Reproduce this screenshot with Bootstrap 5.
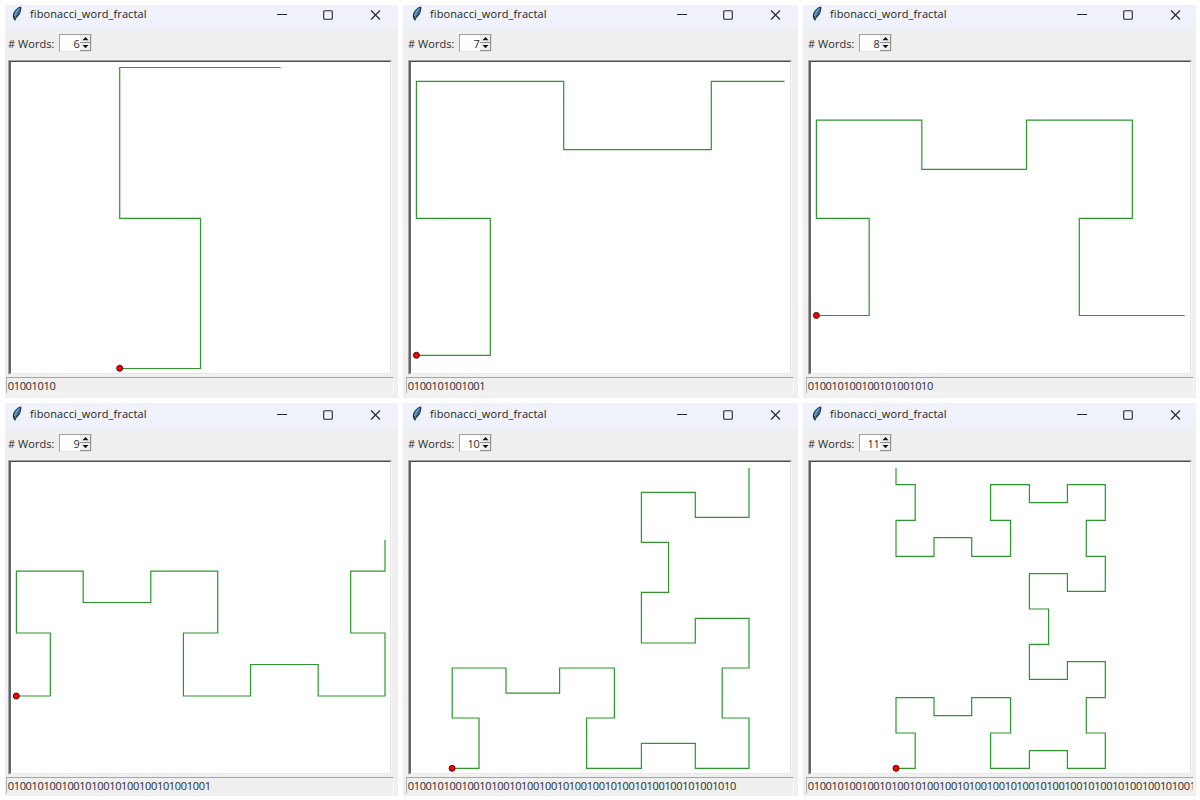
<!DOCTYPE html>
<html lang="en">
<head>
<meta charset="utf-8">
<meta name="viewport" content="width=device-width, initial-scale=1">
<title>fibonacci_word_fractal</title>
<link href="https://cdn.jsdelivr.net/npm/bootstrap@5.3.0/dist/css/bootstrap.min.css" rel="stylesheet">
<style>
  body { background: #fff; font-family: "Open Sans", "Noto Sans", sans-serif; font-size: 11px; line-height: 16px; color: #2a2a2a; }
  .desk { width: 1200px; height: 800px; display: grid; grid-template-columns: 393px 395px 393px; grid-template-rows: 393px 393px; gap: 5px; padding: 5px; }
  .win { background: #efefef; padding-left: 3px; }
  .win:nth-child(3n+1) { padding-left: 1px; }
  .titlebar { height: 24px; background: #eff2fb; margin-left: -3px; padding-left: 8px; color: #1b1b1b; }
  .win:nth-child(3n+1) .titlebar { margin-left: -1px; padding-left: 6px; }
  .win:nth-child(n+4) .titlebar { height: 26px; }
  .titlebar > * { height: 28px; }
  .title-text { width: 119px; margin-left: 7px; line-height: 26px; letter-spacing: .1px; }
  .glyphs { width: 110px; margin-left: 126px; }
  .tools { height: 31px; padding: 5px 0 0 2px; }
  .tools label { width: 50.5px; line-height: 20px; letter-spacing: .05px; }
  .spin { width: 33px; height: 18px; background: #fff; border: 1px solid #e3e3e3; border-top-color: #a0a0a0; border-left-color: #a0a0a0; letter-spacing: -.34px; }
  .spin .num { width: 20px; line-height: 17px; }
  .board { width: 384px; height: 315px; margin-left: 2px; border: 1px solid #a3a3a3; border-right-color: #f6f6f6; border-bottom-color: #f6f6f6; }
  .board > svg { border: 1px solid #e6e6e6; border-top: 1.6px solid #4c4c4c; border-left: 2px solid #636363; background: #fff; width: 382px; height: 313px; }
  .board polyline { fill: none; stroke: #2b982b; stroke-width: 1.2; }
  .board circle { fill: #f00; stroke: #451010; stroke-width: 1; }
  .status { width: 387.500px; height: 17px; margin-top: 2px; border: 1px solid #f8f8f8; border-top-color: #a6a6a6; border-left-color: #b0b0b0; padding-left: .7px; line-height: 16px; letter-spacing: -.32px; white-space: nowrap; }
</style>
</head>
<body>
<svg width="0" height="0" class="position-absolute">
  <symbol id="feather" viewBox="0 0 12 17">
    <path d="M10.200 1C6.500 1.200 2.800 5.300 1.800 9.600L2.100 12.700L4.300 15.600L5.300 12.500C8.800 10.300 11 4.800 10.200 1Z" fill="#26384c"/>
    <path d="M8.800 2C5.800 3.200 3.500 6.500 3 10L4.200 11C5.500 8 7 5 8.800 2Z" fill="#5a9ad8"/>
    <path d="M9.400 2.800C7.500 5 6 8 5.200 11C7.700 9.200 9.500 5.700 9.400 2.800Z" fill="#3a70ad"/>
    <path d="M8.800 2.800C6.700 5.500 4.800 9 4.200 12.500" fill="none" stroke="#a5c6e2" stroke-width=".5"/>
  </symbol>
  <symbol id="controls" viewBox="0 0 110 28">
    <g fill="none" stroke="#262626" stroke-width="1.1">
      <path d="M2 13.500H12M96 9.500L105 18.500M105 9.500L96 18.500"/>
      <rect x="48.700" y="9.700" width="8.600" height="8.600" rx="1"/>
    </g>
  </symbol>
  <symbol id="arrows" viewBox="0 0 11 16">
    <path d="M0 0H11V16H0Z" fill="#efefef"/>
    <path d="M0 7.500H11M0 15.500H11M10.500 0V16" stroke="#8c8c8c" fill="none"/>
    <path d="M2.500 5.200L5.500 2L8.500 5.200ZM2.500 10L5.500 13.200L8.500 10Z" fill="#111"/>
  </symbol>
</svg>

<main class="desk">
  <section class="win overflow-hidden">
    <header class="titlebar d-flex align-items-end"><svg class="flex-shrink-0" width="12" height="28" viewBox="0 0 12 28"><use href="#feather" y="4.500" width="12" height="17"/></svg><span class="title-text">fibonacci_word_fractal</span><svg class="glyphs"><use href="#controls"/></svg></header>
    <div class="tools d-flex"><label># Words:</label><div class="spin d-flex"><span class="num text-end">6</span><svg width="11" height="16"><use href="#arrows"/></svg></div></div>
    <div class="board"><svg class="d-block" viewBox="11 62 379 311"><polyline points="119.5,368.5 200.5,368.5 200.5,218.3 119.7,218.3 119.7,67.5 280.5,67.5"/><circle cx="119.700" cy="368.300" r="3"/></svg></div>
    <div class="status overflow-hidden">01001010</div>
  </section>

  <section class="win overflow-hidden">
    <header class="titlebar d-flex align-items-end"><svg class="flex-shrink-0" width="12" height="28" viewBox="0 0 12 28"><use href="#feather" y="4.500" width="12" height="17"/></svg><span class="title-text">fibonacci_word_fractal</span><svg class="glyphs"><use href="#controls"/></svg></header>
    <div class="tools d-flex"><label># Words:</label><div class="spin d-flex"><span class="num text-end">7</span><svg width="11" height="16"><use href="#arrows"/></svg></div></div>
    <div class="board"><svg class="d-block" viewBox="11 62 379 311"><polyline points="16.4,355.4 90.3,355.4 90.3,218.3 16.4,218.3 16.4,81.3 163.7,81.3 163.7,149.6 311.3,149.6 311.3,81.3 384.5,81.3"/><circle cx="16.400" cy="355.300" r="3"/></svg></div>
    <div class="status overflow-hidden">0100101001001</div>
  </section>

  <section class="win overflow-hidden">
    <header class="titlebar d-flex align-items-end"><svg class="flex-shrink-0" width="12" height="28" viewBox="0 0 12 28"><use href="#feather" y="4.500" width="12" height="17"/></svg><span class="title-text">fibonacci_word_fractal</span><svg class="glyphs"><use href="#controls"/></svg></header>
    <div class="tools d-flex"><label># Words:</label><div class="spin d-flex"><span class="num text-end">8</span><svg width="11" height="16"><use href="#arrows"/></svg></div></div>
    <div class="board"><svg class="d-block" viewBox="11 62 379 311"><polyline points="16.4,315.5 69.2,315.5 69.2,218.3 16.4,218.3 16.4,120.2 121.8,120.2 121.8,169.3 226.5,169.3 226.5,120.2 332.3,120.2 332.3,218.3 279.3,218.3 279.3,315.5 384.5,315.5"/><circle cx="16.400" cy="315.400" r="3"/></svg></div>
    <div class="status overflow-hidden">010010100100101001010</div>
  </section>

  <section class="win overflow-hidden">
    <header class="titlebar d-flex align-items-end"><svg class="flex-shrink-0" width="12" height="28" viewBox="0 0 12 28"><use href="#feather" y="4.500" width="12" height="17"/></svg><span class="title-text">fibonacci_word_fractal</span><svg class="glyphs"><use href="#controls"/></svg></header>
    <div class="tools d-flex"><label># Words:</label><div class="spin d-flex"><span class="num text-end">9</span><svg width="11" height="16"><use href="#arrows"/></svg></div></div>
    <div class="board"><svg class="d-block" viewBox="11 62 379 311"><polyline points="16.4,296 50.3,296 50.3,233 16.4,233 16.4,171.2 83.2,171.2 83.2,202.5 150.8,202.5 150.8,171.2 217.7,171.2 217.7,233 183.4,233 183.4,296 250.5,296 250.5,264.5 318.2,264.5 318.2,296 385,296 385,233 350.7,233 350.7,171.2 385,171.2 385,140"/><circle cx="16.300" cy="296" r="3"/></svg></div>
    <div class="status overflow-hidden">0100101001001010010100100101001001</div>
  </section>

  <section class="win overflow-hidden">
    <header class="titlebar d-flex align-items-end"><svg class="flex-shrink-0" width="12" height="28" viewBox="0 0 12 28"><use href="#feather" y="4.500" width="12" height="17"/></svg><span class="title-text">fibonacci_word_fractal</span><svg class="glyphs"><use href="#controls"/></svg></header>
    <div class="tools d-flex"><label># Words:</label><div class="spin d-flex"><span class="num text-end">10</span><svg width="11" height="16"><use href="#arrows"/></svg></div></div>
    <div class="board"><svg class="d-block" viewBox="11 62 379 311"><polyline points="52.2,368.4 79,368.4 79,318 52.2,318 52.2,268 106,268 106,293.2 159.6,293.2 159.6,268 214.4,268 214.4,318 186.6,318 186.6,368.4 241.4,368.4 241.4,343.4 295.3,343.4 295.3,368.4 349,368.4 349,318 322.2,318 322.2,268 349,268 349,218.4 295.3,218.4 295.3,243 241.4,243 241.4,192.4 268.5,192.4 268.5,142.3 241.4,142.3 241.4,92.4 295.3,92.4 295.3,117.4 349,117.4 349,68"/><circle cx="52.100" cy="368.300" r="3"/></svg></div>
    <div class="status overflow-hidden">0100101001001010010100100101001001010010100100101001010</div>
  </section>

  <section class="win overflow-hidden">
    <header class="titlebar d-flex align-items-end"><svg class="flex-shrink-0" width="12" height="28" viewBox="0 0 12 28"><use href="#feather" y="4.500" width="12" height="17"/></svg><span class="title-text">fibonacci_word_fractal</span><svg class="glyphs"><use href="#controls"/></svg></header>
    <div class="tools d-flex"><label># Words:</label><div class="spin d-flex"><span class="num text-end">11</span><svg width="11" height="16"><use href="#arrows"/></svg></div></div>
    <div class="board"><svg class="d-block" viewBox="11 62 379 311"><polyline points="96,368.4 115.2,368.4 115.2,333 96,333 96,297.7 134,297.7 134,315.6 171.7,315.6 171.7,297.7 210.6,297.7 210.6,333 190.6,333 190.6,368.4 229.4,368.4 229.4,350.6 267.4,350.6 267.4,368.4 305.3,368.4 305.3,333 286.3,333 286.3,297.7 305.3,297.7 305.3,261.6 267.4,261.6 267.4,279.4 229.4,279.4 229.4,244.3 248.6,244.3 248.6,209 229.4,209 229.4,173.6 267.4,173.6 267.4,191.4 305.3,191.4 305.3,156.4 286.3,156.4 286.3,120.3 305.3,120.3 305.3,84.7 267.4,84.7 267.4,102.6 229.4,102.6 229.4,84.7 190.6,84.7 190.6,120.3 210.6,120.3 210.6,156.4 171.7,156.4 171.7,137.7 134,137.7 134,156.4 96,156.4 96,120.3 115.2,120.3 115.2,84.7 96,84.7 96,68"/><circle cx="96" cy="368.300" r="3"/></svg></div>
    <div class="status overflow-hidden">01001010010010100101001001010010010100101001001010010100100101001</div>
  </section>
</main>
<script src="https://cdn.jsdelivr.net/npm/bootstrap@5.3.0/dist/js/bootstrap.bundle.min.js"></script>
</body>
</html>
